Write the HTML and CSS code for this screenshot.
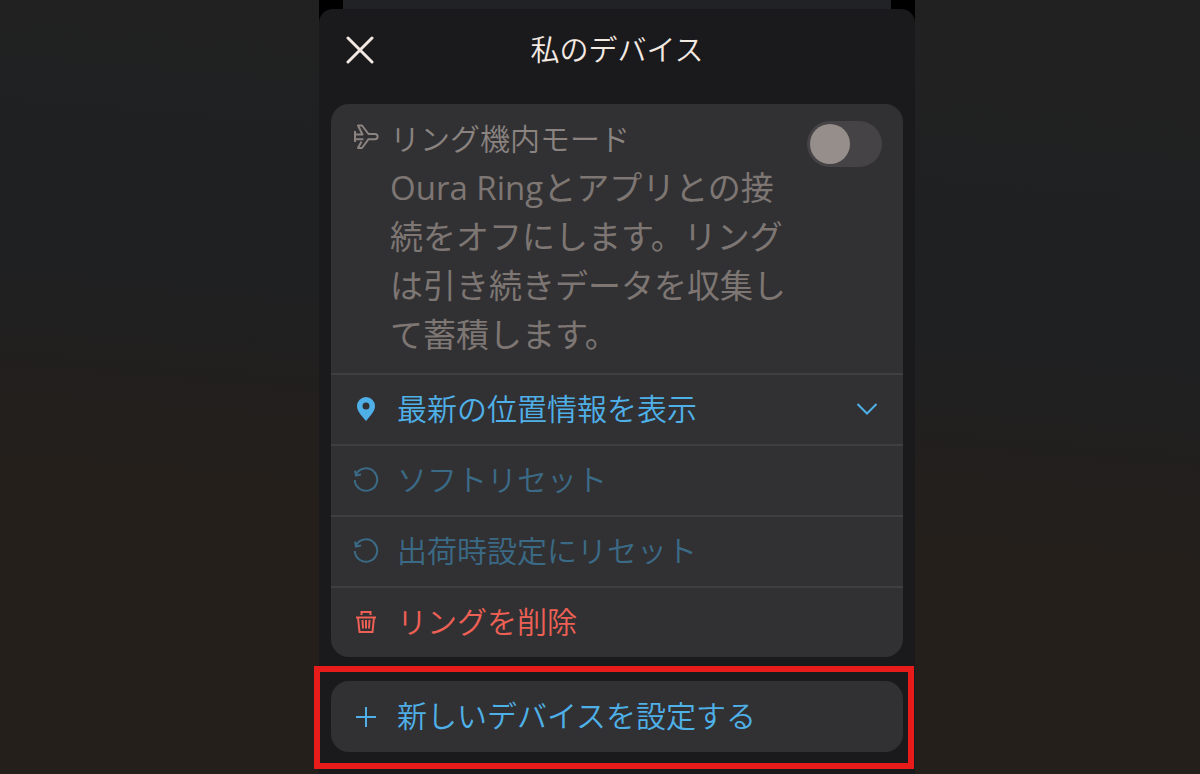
FILE: index.html
```html
<!DOCTYPE html>
<html lang="ja">

<head>
    <meta charset="UTF-8">
    <meta name="viewport" content="width=device-width, initial-scale=1.0">
    <title>私のデバイス</title>
    <link rel="stylesheet" href="styles.css">
</head>

<body>
    <div class="phone">
        <div class="back-sheet"></div>

        <main class="sheet">
            <header class="header">
                <button type="button" class="close" aria-label="閉じる">
                    <svg width="28" height="28" viewBox="0 0 28 28" fill="none" stroke="currentColor" stroke-width="3" stroke-linecap="round">
                        <path d="M2 2L26 26M26 2L2 26" />
                    </svg>
                </button>
                <h1>私のデバイス</h1>
            </header>

            <section class="card">
                <div class="airplane">
                    <svg class="icon" width="26" height="26" viewBox="0 0 26 26" fill="none" stroke="currentColor" stroke-width="2" stroke-linejoin="round">
                        <path d="M2 7V18M2 10.5H9.5L5 1.5H9L15.5 10H22A2.6 2.6 0 0 1 22 15.2H15.5L9 24H5L8.5 17.5M2 15.2H10.5" />
                    </svg>
                    <div class="airplane-text">
                        <label for="airplane">リング機内モード</label>
                        <p id="airplane-note">Oura Ringとアプリとの接続をオフにします。リングは引き続きデータを収集して蓄積します。</p>
                    </div>
                    <input type="checkbox" role="switch" id="airplane" class="switch" aria-describedby="airplane-note" disabled>
                </div>

                <button type="button" class="row">
                    <svg class="icon" width="26" height="26" viewBox="0 0 26 26" fill="currentColor">
                        <path fill-rule="evenodd" d="M13 1A9 9 0 0 0 4 10C4 15.5 9 20 13 25C17 20 22 15.5 22 10A9 9 0 0 0 13 1ZM13 6.5A3.5 3.5 0 1 1 13 13.5A3.5 3.5 0 0 1 13 6.5Z" />
                    </svg>
                    <span>最新の位置情報を表示</span>
                    <svg class="chevron" width="22" height="14" viewBox="0 0 22 14" fill="none" stroke="currentColor" stroke-width="2">
                        <path d="M1.5 2L11 11.5L20.5 2" />
                    </svg>
                </button>

                <button type="button" class="row" disabled>
                    <svg class="icon" width="26" height="26" viewBox="0 0 26 26" fill="none" stroke="currentColor" stroke-width="2">
                        <path d="M3 7.5A11.2 11.2 0 1 1 1.8 13M2 3.5L3 8.5L8 7.5" />
                    </svg>
                    <span>ソフトリセット</span>
                </button>

                <button type="button" class="row" disabled>
                    <svg class="icon" width="26" height="26" viewBox="0 0 26 26" fill="none" stroke="currentColor" stroke-width="2">
                        <path d="M3 7.5A11.2 11.2 0 1 1 1.8 13M2 3.5L3 8.5L8 7.5" />
                    </svg>
                    <span>出荷時設定にリセット</span>
                </button>

                <button type="button" class="row danger">
                    <svg class="icon" width="26" height="26" viewBox="0 0 26 26" fill="none" stroke="currentColor" stroke-width="2">
                        <path d="M3 8.5H23M8.5 6V3H17.5V6M5 8.5L6.5 23H19.5L21 8.5M9.5 11L10 19.5M13 11V19.5M16.5 11L16 19.5" />
                    </svg>
                    <span>リングを削除</span>
                </button>
            </section>

            <section class="highlight">
                <div class="card">
                    <button type="button" class="row">
                        <svg class="icon" width="26" height="26" viewBox="0 0 26 26" fill="none" stroke="currentColor" stroke-width="2">
                            <path d="M13 4V24M3 14H23" />
                        </svg>
                        <span>新しいデバイスを設定する</span>
                    </button>
                </div>
            </section>
        </main>
    </div>
</body>

</html>
```

FILE: styles.css
```css
* {
    box-sizing: border-box;
}

body {
    margin: 0;
    min-height: 100vh;
    display: grid;
    grid-template-columns: 319fr minmax(0, 596px) 285fr;
    background: linear-gradient(185deg, #212121 0%, #1f2022 40%, #241f1b 65%, #241f1b 100%);
    font-family: "Open Sans", "Noto Sans CJK JP", sans-serif;
    font-weight: 350;
    font-size: 30px;
    color: #f3e9e3;
}

/* スマホの画面 */
.phone {
    grid-column: 2;
    display: flex;
    flex-direction: column;
    background-color: #000;
}

.back-sheet {
    height: 9px;
    margin: 0 24px;
    background-color: #202226;
}

.sheet {
    flex: 1;
    background-color: #1a1a1c;
    border-radius: 14px 14px 0 0;
}

/* ヘッダー */
.header {
    display: grid;
    grid-template-columns: 60px 1fr 60px;
    align-items: center;
    height: 82px;
    margin-bottom: 13px;
    padding: 0 12px;
}

.header h1 {
    margin: 0;
    padding-bottom: 4px;
    font-size: 29px;
    font-weight: 350;
    text-align: center;
}

.close {
    display: flex;
    padding: 15px;
    border: none;
    background: none;
    color: inherit;
    cursor: pointer;
}

/* カード */
.card {
    margin: 0 12px;
    border-radius: 18px;
    background-color: #313133;
    overflow: hidden;
}

.icon {
    flex: none;
}

/* 機内モード */
.airplane {
    display: flex;
    align-items: flex-start;
    padding: 10px 21px 14px 22px;
    line-height: 49px;
    color: #8a8380;
}

.airplane .icon {
    margin: 10px 11px 0 0;
}

.airplane-text {
    flex: 0 1 400px;
}

.airplane-text label {
    display: block;
}

.airplane-text p {
    margin: 0;
    font-size: 33px;
    font-weight: 400;
    color: #7d7673;
}

.switch {
    appearance: none;
    flex: none;
    width: 75px;
    height: 46px;
    margin: 7px 0 0 auto;
    padding: 3px;
    border-radius: 23px;
    background-color: #464346;
}

.switch::before {
    content: "";
    display: block;
    width: 40px;
    height: 40px;
    border-radius: 50%;
    background-color: #958e8a;
}

.switch:checked::before {
    margin-left: auto;
}

/* メニューの行 */
.row {
    display: flex;
    align-items: center;
    gap: 18px;
    width: 100%;
    height: 71px;
    padding: 0 25px 2px 22px;
    border: none;
    background: none;
    font: inherit;
    color: #4fb0e8;
    text-align: left;
    cursor: pointer;
}

.row span {
    padding-bottom: 3px;
}

.airplane ~ .row {
    border-top: 2px solid #3f3f41;
}

.row:disabled {
    color: #3b6a86;
    cursor: default;
}

.row.danger {
    color: #ee6055;
}

.chevron {
    margin-left: auto;
}

/* 赤い枠 */
.highlight {
    margin: 9px 1px 0 -5px;
    padding: 9px 5px 11px 11px;
    border: 6px solid #e81b1b;
}

.highlight .card {
    margin: 0;
}
```
